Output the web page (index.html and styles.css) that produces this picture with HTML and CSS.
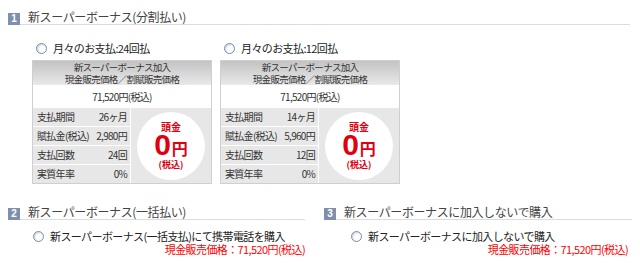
FILE: index.html
```html
<!DOCTYPE html>
<html lang="ja">
<head>
    <meta charset="UTF-8">
    <title>新スーパーボーナス</title>
    <link rel="stylesheet" href="styles.css">
</head>
<body>
<div id="wrapper">
    <div class="section s1">
        <h2 class="sec-title"><span class="num">1</span><span class="title">新スーパーボーナス(分割払い)</span></h2>
        <div class="plans">
            <div class="plan">
                <label class="choice"><span class="radio"></span>月々のお支払:24回払</label>
                <div class="card">
                    <div class="card-head"><p>新スーパーボーナス加入</p><p>現金販売価格／割賦販売価格</p></div>
                    <div class="card-price">71,520円(税込)</div>
                    <div class="card-body">
                        <ul class="rows">
                            <li><span>支払期間</span><span>26ヶ月</span></li>
                            <li><span>賦払金(税込)</span><span>2,980円</span></li>
                            <li><span>支払回数</span><span>24回</span></li>
                            <li><span>実質年率</span><span>0%</span></li>
                        </ul>
                        <div class="down">
                            <div class="circle">
                                <span class="c-top">頭金</span>
                                <span class="c-mid"><b>0</b>円</span>
                                <span class="c-bot">(税込)</span>
                            </div>
                        </div>
                    </div>
                </div>
            </div>
            <div class="plan">
                <label class="choice"><span class="radio"></span>月々のお支払:12回払</label>
                <div class="card">
                    <div class="card-head"><p>新スーパーボーナス加入</p><p>現金販売価格／割賦販売価格</p></div>
                    <div class="card-price">71,520円(税込)</div>
                    <div class="card-body">
                        <ul class="rows">
                            <li><span>支払期間</span><span>14ヶ月</span></li>
                            <li><span>賦払金(税込)</span><span>5,960円</span></li>
                            <li><span>支払回数</span><span>12回</span></li>
                            <li><span>実質年率</span><span>0%</span></li>
                        </ul>
                        <div class="down">
                            <div class="circle">
                                <span class="c-top">頭金</span>
                                <span class="c-mid"><b>0</b>円</span>
                                <span class="c-bot">(税込)</span>
                            </div>
                        </div>
                    </div>
                </div>
            </div>
        </div>
    </div>
    <div class="bottom">
        <div class="section s2">
            <h2 class="sec-title"><span class="num">2</span><span class="title">新スーパーボーナス(一括払い)</span></h2>
            <label class="choice"><span class="radio"></span>新スーパーボーナス(一括支払)にて携帯電話を購入</label>
            <p class="cash">現金販売価格：71,520円(税込)</p>
        </div>
        <div class="section s3">
            <h2 class="sec-title"><span class="num">3</span><span class="title">新スーパーボーナスに加入しないで購入</span></h2>
            <label class="choice"><span class="radio"></span>新スーパーボーナスに加入しないで購入</label>
            <p class="cash">現金販売価格：71,520円(税込)</p>
        </div>
    </div>
</div>
</body>
</html>
```

FILE: styles.css
```css
body{
    margin: 0;
    background: #fff;
    color: #333;
    font-family: "Noto Sans CJK JP", "Liberation Sans", sans-serif;
}
ul{
    margin: 0;
    padding: 0;
    list-style: none;
}
p{
    margin: 0;
}

#wrapper{
    width: 640px;
    height: 263px;
    overflow: hidden;
}

/* 見出し */
.sec-title{
    display: flex;
    align-items: flex-end;
    margin: 0;
    font-weight: normal;
}
.num{
    width: 12px;
    height: 12px;
    background: #7f90ad;
    color: #fff;
    font: bold 10px/12px "Liberation Sans", sans-serif;
    text-align: center;
}
.title{
    flex: 1;
    padding-left: 8px;
    font-size: 12px;
    line-height: 14px;
    color: #444;
    border-bottom: 1px solid #dcdcdc;
    letter-spacing: -0.4px;
}

.s1{
    padding: 10px 10px 0 8px;
}

/* ラジオ */
.choice{
    display: flex;
    align-items: center;
    height: 14px;
    font-size: 11px;
    color: #222;
    letter-spacing: -0.6px;
}
.radio{
    width: 9px;
    height: 9px;
    border: 1px solid #7a8cab;
    border-radius: 50%;
    background: #fff;
    box-shadow: inset 1px 1px 2px #c9d1de;
    margin-right: 6px;
    flex-shrink: 0;
}

.plans{
    display: flex;
    gap: 8px;
    margin-top: 16px;
    padding-left: 24px;
}
.plan{
    width: 180px;
}
.plan .choice{
    padding-left: 4px;
}

/* カード */
.card{
    margin-top: 5px;
    border: 1px solid #cfcfcf;
    background: #e7e7e7;
    font-size: 10px;
    letter-spacing: -0.7px;
    color: #333;
}
.card-head{
    height: 24px;
    background: linear-gradient(#c3c3c3, #e9e9e9);
    text-align: center;
    font-size: 9.5px;
    line-height: 12px;
}
.card-price{
    height: 23px;
    line-height: 23px;
    background: #fff;
    text-align: center;
}
.card-body{
    display: flex;
}
.rows{
    width: 97px;
    border-right: 1px solid #fff;
}
.rows li{
    display: flex;
    justify-content: space-between;
    height: 18px;
    line-height: 18px;
    padding: 0 3px 0 4px;
    border-top: 1px solid #fff;
}
.rows li:first-child{
    border-top: none;
}
.down{
    flex: 1;
    display: flex;
    align-items: center;
    justify-content: center;
}
.circle{
    width: 68px;
    height: 68px;
    border-radius: 50%;
    background: #fff;
    color: #e0000f;
    display: flex;
    flex-direction: column;
    align-items: center;
    font-weight: bold;
    letter-spacing: 0;
}
.c-top{
    margin-top: 8px;
    font-size: 10px;
    line-height: 13px;
}
.c-mid{
    font-size: 16px;
    line-height: 24px;
    height: 24px;
}
.c-mid b{
    font: bold 30px/24px "Liberation Sans", sans-serif;
    margin-right: 1px;
}
.c-bot{
    margin-top: 2px;
    font-size: 9px;
    line-height: 12px;
}

/* 下段 */
.bottom{
    display: flex;
    margin-top: 21px;
}
.s2{
    margin-left: 8px;
    width: 297px;
}
.s3{
    margin-left: 19px;
    width: 308px;
}
.bottom .choice{
    margin-top: 9px;
}
.s2 .choice{
    padding-left: 25px;
}
.s3 .choice{
    padding-left: 27px;
}
.cash{
    text-align: right;
    color: #f00;
    font-size: 11px;
    line-height: 12px;
    letter-spacing: -0.6px;
}
.s3 .cash{
    padding-right: 4px;
}
```
